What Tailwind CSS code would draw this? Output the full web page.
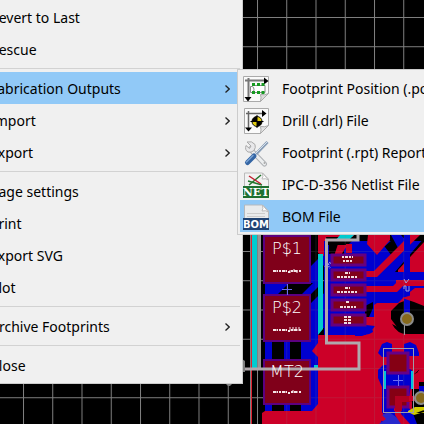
<!DOCTYPE html>
<html lang="en">
<head>
<meta charset="utf-8">
<meta name="viewport" content="width=device-width, initial-scale=1">
<title>PCB editor – File menu</title>
<script src="https://cdn.jsdelivr.net/npm/@tailwindcss/browser@4"></script>
</head>
<body class="relative h-screen overflow-hidden bg-black font-['Noto_Sans','Open_Sans',sans-serif] text-sm text-black">

<!-- Board canvas -->
<svg class="absolute inset-0 h-full w-full" viewBox="0 0 424 424" preserveAspectRatio="xMinYMin slice" aria-label="Board layout">
  <defs>
    <pattern id="grid" x="23" y="17" width="29.25" height="29.25" patternUnits="userSpaceOnUse">
      <path d="M.5 0V29.25M0 .5H29.25" stroke="#808080" fill="none"/>
    </pattern>
  </defs>
  <rect width="424" height="424" fill="#000"/>
  <rect width="424" height="424" fill="url(#grid)"/>

  <!-- blue copper -->
  <path fill="#0000d0" d="M265 230H318V411H301V340H290V411H284V340H272V411H265Z"/>
  <path fill="#000" d="M312 235h6v31l-7 7V235ZM272 340h12v71h-12ZM290 340h11v71h-11Z"/>
  <path fill="#000" d="M278 294l11-11h24l-11 11ZM311 294l14-14v9l-14 14Z"/>
  <path fill="#0000d0" d="M311 266l14-14v12l-14 14ZM311 308l14-16v36h-14Z"/>
  <path fill="#0000d0" d="M301 341h17v65l-5 5h-12Z"/>
  <path fill="#0000d0" d="M324 241H424V424H324Z"/>
  <path fill="#000" d="M329 241h15v13h-15ZM366 258l12-6 20-17h17l-24 25v33h-10l-6-10-9-3ZM395 272l29-34v34ZM366 281l10-8h15v11h-25Z"/>
  <path fill="#0000d0" d="M366 250l12-12 14 18v38h-26ZM404 250h6v50h-6ZM391 235h10l9 10v14h-6Z"/>

  <!-- red copper -->
  <path fill="#cc0028" d="M318 235h36l-13 20v10h-6v-12l4-12h-15v15l-6-3Z"/>
  <path fill="#000" d="M326 237h30l-8 8h-20Z"/>
  <path fill="#00ccd0" d="M340 235h14l-6 6h-13Z"/>
  <path fill="#cc0028" d="M262 413l3-2h47l6-7v-47l-6-6 6-8v-8h48v-18h8v-12l3-2h21l8-8 9-7h17V424H262Z"/>
  <path fill="#cc0028" d="M368 235h22v5l-13 15-10-11ZM363 271h11l36-36h10l-43 42h-14ZM363 286h30l6-6h25v6h-21l-6 6h-34ZM398 270l26-28v30h-26ZM346 253v-9h6v9Z"/>
  <path fill="#000" d="M391 311l8-8 8-3h12l5 3v28l-8 3-10-2-9-5-6-8Z"/>
  <path fill="#0000d0" d="M404 235h6v84h-6Z"/>
  <path fill="#cc0028" d="M396 280h28v6h-28ZM402 298l10-3h12v11l-10-4Z"/>
  <path fill="#000" d="M365 306l8-4v6l-4 9h-4Z"/>
  <path fill="#0000d0" d="M330 326h36v-1l9 1-5 7-8 3h-7v-9h-13v8h-15v-9ZM354 326h14q5 3 5 6-4 3-9 3h-10Z"/>
  <path fill="#000" d="M392 324l8 4 16 2 8-3v7h-17q-10 0-15-10Z"/>

  <!-- lower right component copper -->
  <path fill="#0000d0" d="M378 353l4-9 5-2 5 2v8h12v-8l6-2 6 3 3 8v3h-12v12l5 2v11l-3 16v11l15 19h-45l5-12-2-3v-25l-4-9v-8l5-5h5v-8h-6Z"/>
  <path fill="#000" d="M413 375l6-5v19h-7v22l5 13h7V372h-6Z"/>
  <path fill="#cc0028" d="M418 371h6v11h-6ZM394 404h7v10l12 10h-9l-10-12ZM387 413l14 11h-14l-11-7Z"/>
  <path fill="#0000d0" d="M419 386h5v8h-5ZM386 411h20l10 13h-12l-8-9Z"/>
  <path fill="#2828cc" d="M382 415l7-3 17 12h-27l7-5Z"/>
  <path fill="#cc0028" d="M395 406h6v8l9 10h-9l-6-9Z"/>
  <path fill="#d0cc00" d="M408 411l7-4h9v5l-10 3-6-3ZM416 413h8v-3Z"/>

  <!-- grid over copper -->
  <rect x="262" y="235" width="162" height="189" fill="url(#grid)" opacity=".18"/>

  <!-- board edge -->
  <path stroke="#808080" d="M250.500 235V424M257.500 235V424"/>
  <path stroke="#e02030" d="M251.500 235V424"/>
  <path fill="#00ccd0" d="M252 235h5v133h-5ZM318 254h5v75l-5 6Z"/>
  <path fill="#969696" d="M258 235h3v133h-3Z"/>
  <path fill="#00ccd0" d="M314 365h4v3h-4Z"/>

  <!-- large pads -->
  <g fill="#80001a" stroke="#5c0080" stroke-width="2">
    <rect x="264" y="236" width="46" height="47"/>
    <rect x="264" y="295" width="46" height="46"/>
    <rect x="264" y="360" width="46" height="44"/>
  </g>
  <!-- header pads -->
  <g fill="#80001a" stroke="#660080" stroke-width="3">
    <rect x="332" y="255" width="33" height="10"/>
    <rect x="332" y="270" width="33" height="10"/>
    <rect x="332" y="285" width="33" height="10"/>
    <rect x="332" y="300" width="33" height="10"/>
    <rect x="332" y="315" width="33" height="10"/>
  </g>
  <!-- chip pads -->
  <g fill="#850014" stroke="#660088" stroke-width="3">
    <rect x="388" y="353" width="20" height="20"/>
    <rect x="388" y="387" width="20" height="20"/>
  </g>
  <path fill="#b00020" d="M395 396h17v6h-10v9h-7Z"/>
  <path fill="#cc0028" d="M409 396h9v5h-9Z"/>
  <path fill="#00c4dc" d="M383 371h3v18h-3ZM411 371h3v18h-3Z"/>
  <rect x="383.500" y="348.500" width="30" height="64" fill="none" stroke="#a09aa8"/>
  <path d="M393 380.500h10M398.500 375v11M282 289.500h10M287.500 284v11" stroke="#6c6cf0"/>
  <path d="M404.500 324v11" stroke="#999"/>

  <!-- silkscreen outline -->
  <path d="M242 369h117v-26H326.500V240H358v-5" fill="none" stroke="#b0a8ac" stroke-width="3"/>
  <path fill="#808080" d="M242 359l3 2v11h-3ZM226 384h6l-2 2h-2Z"/>
  <path d="M325 267l6-5M326 263l4 5" stroke="#9a9ae0" stroke-width="2" stroke-dasharray="1 1"/>

  <!-- vias -->
  <g fill="#86691c" stroke="#8c8c8c" stroke-width="2">
    <circle cx="407" cy="319" r="6"/>
    <circle cx="421" cy="398" r="6"/>
  </g>

  <!-- pad labels -->
  <g fill="#fff" text-anchor="middle" font-family="DejaVu Sans, sans-serif" font-weight="200" font-size="16">
    <text x="287" y="254">P$1</text>
    <text x="287" y="313">P$2</text>
    <text x="287" y="377">MT2</text>
  </g>
  <g fill="none" stroke="#f4e6e8" stroke-width="2">
    <path id="net" d="M273 271h5m1 0h2m1 0h5m1 1h2m1-1h2m1 0h4m1 0h2" stroke-dasharray="3 .5 2 .5"/>
    <use href="#net" y="59"/>
    <use href="#net" y="121"/>
    <path d="M290 270v3M294 269v3M297 270v3M300 270v2M290 327v4M293 327v4M296 327v4M299 327v4M293 390v3M300 391v2" stroke-width="1"/>
  </g>
  <g fill="none" stroke="#f0dce0" stroke-width="2">
    <path d="M342 257h11M343 261h10" stroke-dasharray="2 1 3 1"/>
    <path d="M345 273h5M337 277h21M345 288h5M337 292h21M346 302h4M340 307h16" stroke-dasharray="3 1 2 1"/>
    <path d="M344 317h8M344 320h8M344 323h8" stroke-dasharray="3 1"/>
  </g>
  <path d="M404 279l2 4 3-4M404 289v-3h2v5h3v-5" fill="none" stroke="#a0a0d8"/>
</svg>

<!-- File menu -->
<nav aria-label="File" class="relative w-[243px] border-r border-b border-[#ccc] bg-[#f0f0f0] pt-px pb-[2px]">
  <ul class="[&_button]:flex [&_button]:h-8 [&_button]:w-full [&_button]:items-center [&_button]:justify-between [&_button]:pt-[2px] [&_button]:pr-3 [&_button]:text-left [&_span]:-ml-[10px] [&_span]:whitespace-nowrap">
    <li><button type="button"><span>Revert to Last</span></button></li>
    <li><button type="button"><span>Rescue</span></button></li>
    <li role="separator" class="my-[3px] mr-[2px] h-px bg-[#d2d2d2]"></li>
    <li class="bg-[#91c9f7]"><button type="button" aria-haspopup="true" aria-expanded="true"><span>Fabrication Outputs</span><svg class="h-2 w-[5px]" viewBox="0 0 5 8" fill="none" stroke="#222" stroke-width="1.300"><path d="M.500 .500 4.200 4 .500 7.500"/></svg></button></li>
    <li><button type="button" aria-haspopup="true"><span>Import</span><svg class="h-2 w-[5px]" viewBox="0 0 5 8" fill="none" stroke="#222" stroke-width="1.300"><path d="M.500 .500 4.200 4 .500 7.500"/></svg></button></li>
    <li><button type="button" aria-haspopup="true"><span>Export</span><svg class="h-2 w-[5px]" viewBox="0 0 5 8" fill="none" stroke="#222" stroke-width="1.300"><path d="M.500 .500 4.200 4 .500 7.500"/></svg></button></li>
    <li role="separator" class="my-[3px] mr-[2px] h-px bg-[#d2d2d2]"></li>
    <li><button type="button"><span>Page settings</span></button></li>
    <li><button type="button"><span>Print</span></button></li>
    <li><button type="button"><span>Export SVG</span></button></li>
    <li><button type="button"><span>Plot</span></button></li>
    <li role="separator" class="my-[3px] mr-[2px] h-px bg-[#d2d2d2]"></li>
    <li><button type="button" aria-haspopup="true"><span>Archive Footprints</span><svg class="h-2 w-[5px]" viewBox="0 0 5 8" fill="none" stroke="#222" stroke-width="1.300"><path d="M.500 .500 4.200 4 .500 7.500"/></svg></button></li>
    <li role="separator" class="my-[3px] mr-[2px] h-px bg-[#d2d2d2]"></li>
    <li><button type="button"><span>Close</span></button></li>
  </ul>
</nav>

<!-- Fabrication Outputs submenu -->
<nav aria-label="Fabrication Outputs" class="absolute top-[69px] right-0 left-[237px] overflow-hidden border border-r-0 border-[#ccc] bg-[#f0f0f0] py-[2px] pl-[2px]">
  <ul class="[&_button]:flex [&_button]:h-8 [&_button]:w-full [&_button]:items-center [&_button]:gap-3 [&_button]:pt-[2px] [&_button]:pl-[3px] [&_button]:text-left [&_button]:whitespace-nowrap [&_svg]:size-[27px] [&_svg]:shrink-0">
    <li><button type="button">
      <svg viewBox="0 0 27 27"><path d="M.500 .500h25v17l-8 8H.500Z" fill="#fafafa" stroke="#aaa"/><path d="M17.500 25.500q1-4 0-7 4 1 8-1Z" fill="#ddd" stroke="#aaa"/><path d="M2 4.500h21M5.500 2v21" stroke="#777" stroke-width="2"/><path d="M21 1.500v7l4.500-3.500ZM1.500 21h7L5 25.500Z" fill="#000"/><path d="M9 16.500H7.500v-6H9q2 0 2 3t-2 3ZM9 9.500h13v7H9" fill="#fff" stroke="#888"/><path d="M9 7h3v3H9ZM14 7h3v3h-3ZM18.500 7h3v3h-3ZM9 15h3v3H9ZM14 15h3v3h-3ZM18.500 15h3v3h-3Z" fill="#179a22"/></svg>
      Footprint Position (.pos) File</button></li>
    <li><button type="button">
      <svg viewBox="0 0 27 27"><path d="M1.500 .500h24v17l-8 8h-16Z" fill="#fafafa" stroke="#aaa"/><path d="M17.500 25.500q1-4 0-7 4 1 8-1Z" fill="#e4e4e4" stroke="#aaa"/><path d="M3 5.500h18M5.500 3v18" stroke="#666" stroke-width="1.500"/><path d="M19 2v7l4.500-3.500ZM2 19.500h7L5.500 23.500Z" fill="#000"/><circle cx="14" cy="13.500" r="5" fill="#e0cc10" stroke="#111"/><path d="M14 13.500V8.500A5 5 0 0 0 9 13.500ZM14 13.500v5a5 5 0 0 0 5-5Z"/><path d="M14 7v13M7.500 13.500h13" stroke="#000"/></svg>
      Drill (.drl) File</button></li>
    <li><button type="button">
      <svg viewBox="0 0 27 27"><path d="M7 9 21.500 24" stroke="#aeb1b5" stroke-width="5" stroke-linecap="round"/><path d="M7 9 21.500 24" stroke="#eceeef" stroke-width="3" stroke-linecap="round"/><path d="M4 2 8 6 6.500 8.500 3 5.500Q1.500 10 5 12q3 1 6-1.500 2-3 1-6Q9 .500 4 2Z" fill="#e8e8ea" stroke="#aaa"/><path d="M24.500 2 13 14" stroke="#8a9fb8" stroke-width="3"/><path d="M24 2 12 14" stroke="#d6e0ea"/><path d="M11 16 4.500 22.500" stroke="#3465a4" stroke-width="5" stroke-linecap="round"/><path d="M10 15.500 3.500 22" stroke="#7ca4d4" stroke-width="1.500" stroke-linecap="round"/><circle cx="21.500" cy="23" r="1" fill="#aaa"/></svg>
      Footprint (.rpt) Report</button></li>
    <li><button type="button">
      <svg viewBox="0 0 27 27"><path d="M1.500 1h18l6 6v9h-24Z" fill="#f2f2f2" stroke="#bbb"/><path d="M19.500 1q1 4-.500 6 4-1 6.500 1Z" fill="#fff" stroke="#bbb"/><path d="m5 9 14 4" stroke="#22762c" stroke-width="1.500"/><path d="M6 13 18 3" stroke="#22762c" stroke-width="1.500"/><path d="m6 4 12 8" stroke="#c02030" stroke-width="1.500"/><path d="M0 14h26v12H0Z" fill="#1f7030"/><text x="13" y="24" text-anchor="middle" font-family="DejaVu Serif, serif" font-weight="700" font-size="11" fill="#fff">NET</text></svg>
      IPC-D-356 Netlist File</button></li>
    <li class="bg-[#91c9f7]"><button type="button">
      <svg viewBox="0 0 27 27"><path d="M1.500 1h18l6 6v9h-24Z" fill="#e9ebec" stroke="#b5b9bd"/><path d="M19.500 1q1 4-.500 6 4-1 6.500 1Z" fill="#fff" stroke="#bbb"/><path d="M4 9.500h18M4 12.500h18" stroke="#ccc"/><path d="M0 14h26v12H0Z" fill="#1f4373"/><text x="13" y="24" text-anchor="middle" font-family="DejaVu Sans, sans-serif" font-weight="700" font-size="10" fill="#fff">BOM</text></svg>
      BOM File</button></li>
  </ul>
</nav>
</body>
</html>
